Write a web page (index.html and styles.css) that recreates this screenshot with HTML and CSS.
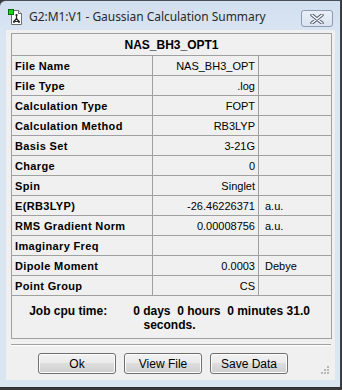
FILE: index.html
```html
<!DOCTYPE html>
<html>
<head>
<meta charset="utf-8">
<link rel="stylesheet" href="styles.css">
</head>
<body>
<div class="window">
  <div class="titlebar">
    <svg class="appicon" width="16" height="17" viewBox="0 0 16 17">
      <path d="M3.5 1.5h7l3 3v11h-10z" fill="#fff" stroke="#6d6d6d"/>
      <path d="M10.5 1.5v3h3" fill="#e6e6e6" stroke="#6d6d6d"/>
      <path d="M8.5 6v3.5M8.5 9.5l-2.5 3M8.5 9.5l2.5 3M6 12.5h5" stroke="#222" stroke-width="1.2" fill="none"/>
      <circle cx="8.5" cy="6" r="1.1" fill="#222"/>
      <circle cx="6" cy="12.8" r="1.1" fill="#222"/>
      <circle cx="11" cy="12.8" r="1.1" fill="#222"/>
      <rect x="0.5" y="0.5" width="5" height="5" fill="#19d21c" stroke="#0b6b0e"/>
    </svg>
    <span class="title">G2:M1:V1 - Gaussian Calculation Summary</span>
    <button class="close" aria-label="Close">
      <svg width="14" height="10" viewBox="0 0 14 10">
        <path d="M2 1l10 8M12 1L2 9" stroke="#4d5b6e" stroke-width="3.4" stroke-linecap="round"/>
        <path d="M2 1l10 8M12 1L2 9" stroke="#fff" stroke-width="1.6" stroke-linecap="round"/>
      </svg>
    </button>
  </div>
  <div class="client">
    <table class="summary">
      <colgroup><col class="c1"><col class="c2"><col class="c3"></colgroup>
      <tr><th colspan="3" class="head">NAS_BH3_OPT1</th></tr>
      <tr><th>File Name</th><td class="val">NAS_BH3_OPT</td><td class="unit"></td></tr>
      <tr><th>File Type</th><td class="val">.log</td><td class="unit"></td></tr>
      <tr><th>Calculation Type</th><td class="val">FOPT</td><td class="unit"></td></tr>
      <tr><th>Calculation Method</th><td class="val">RB3LYP</td><td class="unit"></td></tr>
      <tr><th>Basis Set</th><td class="val">3-21G</td><td class="unit"></td></tr>
      <tr><th>Charge</th><td class="val">0</td><td class="unit"></td></tr>
      <tr><th>Spin</th><td class="val">Singlet</td><td class="unit"></td></tr>
      <tr><th>E(RB3LYP)</th><td class="val">-26.46226371</td><td class="unit">a.u.</td></tr>
      <tr><th>RMS Gradient Norm</th><td class="val">0.00008756</td><td class="unit">a.u.</td></tr>
      <tr><th>Imaginary Freq</th><td class="val"></td><td class="unit"></td></tr>
      <tr><th>Dipole Moment</th><td class="val">0.0003</td><td class="unit">Debye</td></tr>
      <tr><th>Point Group</th><td class="val">CS</td><td class="unit"></td></tr>
      <tr><td colspan="3" class="cpu">Job cpu time:<span class="gap"></span>0 days&nbsp; 0 hours&nbsp; 0 minutes 31.0 seconds.</td></tr>
    </table>
    <div class="sep"></div>
    <div class="buttons">
      <button class="btn">Ok</button>
      <button class="btn">View File</button>
      <button class="btn">Save Data</button>
    </div>
    <div class="grip">
      <i></i><i></i><i></i><i></i><i></i><i></i>
    </div>
  </div>
</div>
</body>
</html>
```

FILE: styles.css
```css
html, body {
  margin: 0;
  padding: 0;
}
body {
  width: 342px;
  height: 390px;
  background: #3a3a3a;
  overflow: hidden;
}
.window {
  width: 340px;
  height: 386px;
  border-top: 1px solid #4a4f57;
  border-right: 1px solid #3c3f45;
  border-bottom: 1px solid #2e2e2e;
  border-top-left-radius: 6px;
  background: linear-gradient(#d2dfef, #dbe6f3 40px, #dbe6f3);
  display: flex;
  flex-direction: column;
}
.titlebar {
  height: 29px;
  display: flex;
  align-items: center;
  position: relative;
  font-family: "Noto Sans", "Liberation Sans", sans-serif;
}
.appicon {
  margin-left: 8px;
  margin-top: 4px;
}
.title {
  margin-left: 5px;
  margin-top: 2px;
  font-size: 12px;
  color: #2a2a2a;
  letter-spacing: -0.05px;
}
.close {
  position: absolute;
  right: 7px;
  top: 9px;
  width: 32px;
  height: 17px;
  padding: 0;
  border: 1px solid #8d9cb2;
  border-radius: 3px;
  background: linear-gradient(#e9eff7, #d9e3f0);
  display: flex;
  align-items: center;
  justify-content: center;
}
.client {
  margin-left: 6px;
  width: 329px;
  height: 350px;
  background: #f0f0f0;
  position: relative;
  display: flex;
  flex-direction: column;
}
.summary {
  margin: 3px 0 0 5px;
  width: 320px;
  border-collapse: collapse;
  border: 1px solid #a0a0a0;
  font-family: "Liberation Sans", Arial, sans-serif;
  font-size: 11px;
  color: #000;
  table-layout: fixed;
}
.c1 { width: 141px; }
.c2 { width: 106px; }
.c3 { width: 73px; }
.summary th, .summary td {
  border: 1px solid #a0a0a0;
  padding: 0 3px;
  height: 19px;
  line-height: 14px;
  white-space: nowrap;
}
.summary th {
  text-align: left;
  font-weight: bold;
  letter-spacing: 0.35px;
}
.summary th.head {
  text-align: center;
  font-size: 12px;
  letter-spacing: 0;
  height: 21px;
}
.summary td.val {
  text-align: right;
}
.summary td.unit {
  padding-left: 6px;
}
.summary td.cpu {
  height: auto;
  white-space: normal;
  text-align: center;
  font-weight: bold;
  font-size: 12px;
  line-height: 14px;
  padding: 8px 18px 6px 14px;
}
.gap {
  display: inline-block;
  width: 26px;
}
.sep {
  margin: 5px 0 0 5px;
  width: 320px;
  height: 1px;
  background: #a0a0a0;
  border-bottom: 1px solid #fff;
}
.buttons {
  display: flex;
  gap: 8px;
  margin: 7px 0 0 32px;
}
.btn {
  width: 78px;
  height: 21px;
  padding: 0;
  border: 1px solid #707070;
  border-radius: 3px;
  background: linear-gradient(#f2f2f2 0, #ebebeb 45%, #dddddd 50%, #cfcfcf 100%);
  box-shadow: inset 0 0 0 1px #fcfcfc;
  font-family: "Liberation Sans", Arial, sans-serif;
  font-size: 12px;
  color: #000;
}
.grip {
  position: absolute;
  right: 6px;
  bottom: 6px;
  width: 9px;
  height: 9px;
}
.grip i {
  position: absolute;
  width: 2px;
  height: 2px;
  background: #b8b8b8;
}
.grip i:nth-child(1) { right: 0; bottom: 6px; }
.grip i:nth-child(2) { right: 0; bottom: 3px; }
.grip i:nth-child(3) { right: 3px; bottom: 3px; }
.grip i:nth-child(4) { right: 0; bottom: 0; }
.grip i:nth-child(5) { right: 3px; bottom: 0; }
.grip i:nth-child(6) { right: 6px; bottom: 0; }
```
